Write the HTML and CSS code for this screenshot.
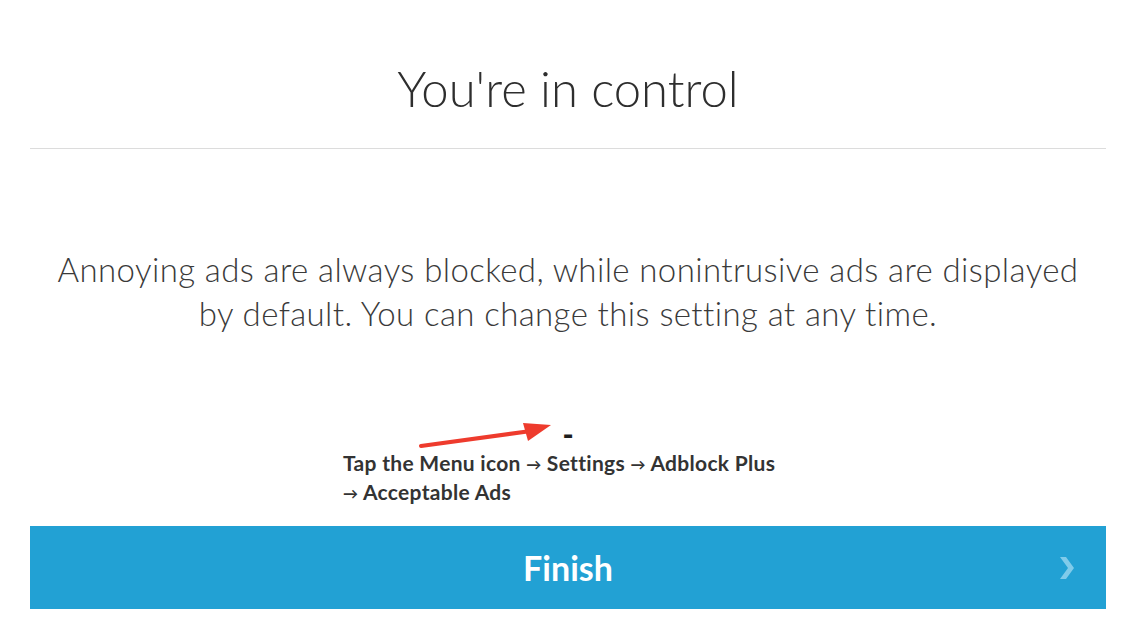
FILE: index.html
```html
<!DOCTYPE html>
<html lang="en">
  <head>
    <meta charset="UTF-8" />
    <title>You're in control</title>
    <link rel="stylesheet" href="styles.css">
  </head>
  <body>
    <div class="page">
      <h1 class="title">You're in control</h1>
      <hr class="divider" />
      <p class="lead">
        Annoying ads are always blocked, while nonintrusive ads are displayed
        by default. You can change this setting at any time.
      </p>
      <div class="howto">
        <div class="menu-icon">-</div>
        <p class="steps">
          Tap the Menu icon <span class="arr">→</span> Settings <span class="arr">→</span> Adblock Plus<br />
          <span class="arr">→</span> Acceptable Ads
        </p>
        <svg class="pointer" width="140" height="30" viewBox="0 0 140 30">
          <line x1="2" y1="25" x2="112" y2="10" stroke="#ee3b2d" stroke-width="4" stroke-linecap="round" />
          <polygon points="104,2 132,4 109,20" fill="#ee3b2d" />
        </svg>
      </div>
      <button class="finish">
        Finish
        <svg class="chevron" width="18" height="24" viewBox="0 0 18 24">
          <polygon points="2,1 8,1 16,12 8,23 2,23 10,12" fill="#80cbea" />
        </svg>
      </button>
    </div>
  </body>
</html>
```

FILE: styles.css
```css
body {
  margin: 0;
  background: #fff;
  font-family: Lato, "Open Sans", sans-serif;
  color: #333;
}
.page {
  padding: 0 30px;
}
.title {
  margin: 0;
  padding-top: 58px;
  height: 148px;
  box-sizing: border-box;
  font-size: 49px;
  font-weight: 300;
  line-height: 60px;
  text-align: center;
  color: #2e2e2e;
}
.divider {
  margin: 0;
  border: none;
  border-top: 1px solid #dcdcdc;
}
.lead {
  margin: 98px 0 0;
  padding: 0 20px;
  font-size: 33px;
  font-weight: 300;
  letter-spacing: 0.4px;
  line-height: 44px;
  text-align: center;
  color: #3a3a3a;
}
.howto {
  position: relative;
  width: 450px;
  margin: 86px auto 0;
}
.menu-icon {
  text-align: center;
  font-weight: 900;
  font-size: 30px;
  line-height: 26px;
  color: #1e1e1e;
}
.steps {
  margin: 2px 0 0;
  font-size: 21px;
  font-weight: bold;
  letter-spacing: 0.3px;
  line-height: 28px;
  color: #333;
}
.arr {
  font-size: 15px;
  vertical-align: 1px;
}
.pointer {
  position: absolute;
  left: 76px;
  top: 0;
}
.finish {
  position: relative;
  display: block;
  width: 100%;
  height: 83px;
  margin-top: 19px;
  border: none;
  background: #22a1d4;
  color: #fff;
  font-family: inherit;
  font-size: 34px;
  font-weight: bold;
}
.chevron {
  position: absolute;
  right: 30px;
  top: 30px;
}
```
